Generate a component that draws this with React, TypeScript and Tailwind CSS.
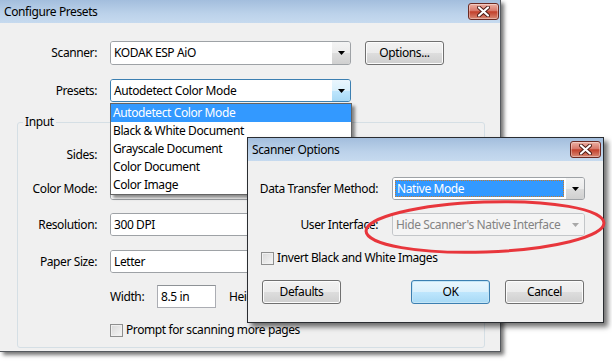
import type { ReactNode } from 'react';

function CloseButton() {
  return (
    <div className="flex h-[17px] w-[31px] items-center justify-center rounded-[3px] border border-[#6b2a22] bg-[linear-gradient(#ecb1a4,#d8786a_45%,#c2402b_52%,#d98a76)] shadow-[inset_0_0_0_1px_rgba(255,255,255,0.35)]">
      <svg width="13" height="11" viewBox="0 0 13 11">
        <path d="M2 1.5l9 8M11 1.5l-9 8" stroke="#4a1a14" strokeWidth="4" strokeLinecap="round" />
        <path d="M2 1.5l9 8M11 1.5l-9 8" stroke="#ffffff" strokeWidth="2.2" strokeLinecap="round" />
      </svg>
    </div>
  );
}

function TitleBar({ title, pr }: { title: string; pr: string }) {
  return (
    <div className={`flex h-[23px] shrink-0 items-center justify-between bg-[linear-gradient(#a3bedd,#bcd2ea_60%,#c6daef)] pl-[4px] ${pr}`}>
      <span>{title}</span>
      <CloseButton />
    </div>
  );
}

function Arrow({ color = '#000000' }: { color?: string }) {
  return (
    <svg width="7" height="4" viewBox="0 0 7 4">
      <path d="M0 0h7L3.5 4z" fill={color} />
    </svg>
  );
}

function Combo({
  value,
  width,
  focused,
  disabled,
  selected,
}: {
  value: string;
  width: string;
  focused?: boolean;
  disabled?: boolean;
  selected?: boolean;
}) {
  const border = focused ? 'border-[#3c7fb1]' : disabled ? 'border-[#c3c6c9]' : 'border-[#9ea2a6]';
  const field = disabled ? 'bg-[#f4f4f4] text-[#838383]' : 'bg-white';
  const btn = focused
    ? 'bg-[linear-gradient(#eaf6fd,#d9f0fc_50%,#bee6fd_51%,#a7d9f5)]'
    : disabled
      ? 'bg-[#f4f4f4]'
      : 'bg-[linear-gradient(#f4f4f4,#ebebeb_50%,#dddddd_51%,#d0d0d0)]';
  return (
    <div className={`flex h-full overflow-hidden rounded-[3px] border whitespace-nowrap ${border} ${width}`}>
      <div className={`flex flex-1 items-center overflow-hidden ${field} ${selected ? 'p-[2px]' : 'pl-[3px]'}`}>
        {selected ? (
          <div className="flex h-full w-full items-center border border-dotted border-[#c87a2a] bg-[#3399ff] pl-[1px] text-white">
            {value}
          </div>
        ) : (
          value
        )}
      </div>
      <div className={`flex w-[18px] shrink-0 items-center justify-center ${btn}`}>
        <Arrow color={disabled ? '#a8a8a8' : '#000000'} />
      </div>
    </div>
  );
}

function Button({ children, width, primary }: { children: ReactNode; width: string; primary?: boolean }) {
  return (
    <div
      className={`flex h-[24px] items-center justify-center rounded-[3px] border ${width} ${
        primary
          ? 'border-[#3c7fb1] bg-[linear-gradient(#eaf6fd,#d9f0fc_50%,#bee6fd_51%,#a7d9f5)] shadow-[inset_0_0_0_1px_#c4e5f6]'
          : 'border-[#707070] bg-[linear-gradient(#f2f2f2,#ebebeb_50%,#dddddd_51%,#cfcfcf)] shadow-[inset_0_0_0_1px_#fcfcfc]'
      }`}
    >
      {children}
    </div>
  );
}

function Checkbox({ label, offset }: { label: string; offset: string }) {
  return (
    <div className={`flex h-[16px] items-center whitespace-nowrap ${offset}`}>
      <div className="h-[13px] w-[13px] shrink-0 border border-[#8e8f8f] bg-[linear-gradient(135deg,#d8d8d8,#f6f6f6)] shadow-[inset_0_0_0_1px_#f0f0f0]" />
      <span className="ml-[3px]">{label}</span>
    </div>
  );
}

const PRESETS = [
  'Autodetect Color Mode',
  'Black & White Document',
  'Grayscale Document',
  'Color Document',
  'Color Image',
];

export default function App() {
  return (
    <div className="relative h-[362px] w-[612px] overflow-hidden bg-white font-['Noto_Sans',sans-serif] text-[12px] leading-[16px] tracking-[-0.4px] text-black">
      {/* Configure Presets */}
      <div className="flex h-[352px] w-[501px] flex-col border-r border-b border-[#55595e] bg-[#f0f0f0] shadow-[3px_3px_4px_rgba(0,0,0,0.55)]">
        <TitleBar title="Configure Presets" pr="pr-[1px]" />
        <div className="flex flex-col pt-[18px]">
          <div className="flex h-[24px] items-center">
            <span className="w-[97px] text-right">Scanner:</span>
            <div className="ml-[13px] h-full">
              <Combo value="KODAK ESP AiO" width="w-[241px]" />
            </div>
            <div className="ml-[14px]">
              <Button width="w-[79px]">Options...</Button>
            </div>
          </div>
          <div className="mt-[14px] flex h-[23px] items-center">
            <span className="w-[97px] text-right">Presets:</span>
            <div className="ml-[13px] h-full">
              <Combo value="Autodetect Color Mode" width="w-[241px]" focused />
            </div>
          </div>

          <fieldset className="mt-[12px] ml-[17px] h-[234px] w-[468px] rounded-[3px] border border-[#d5dfe5]">
            <legend className="ml-[5px] px-[2px]">Input</legend>
            <div className="flex flex-col pt-[13px]">
              {/* Sides and Color Mode values sit under the open list */}
              <div className="flex h-[23px] items-center">
                <span className="w-[79px] text-right">Sides:</span>
                <div className="ml-[13px] h-full">
                  <Combo value="" width="w-[241px]" />
                </div>
              </div>
              <div className="mt-[11px] flex h-[23px] items-center">
                <span className="w-[79px] text-right">Color Mode:</span>
                <div className="ml-[13px] h-full">
                  <Combo value="" width="w-[241px]" />
                </div>
              </div>
              <div className="mt-[13px] flex h-[23px] items-center">
                <span className="w-[79px] text-right">Resolution:</span>
                <div className="ml-[13px] h-full">
                  <Combo value="300 DPI" width="w-[241px]" />
                </div>
              </div>
              <div className="mt-[14px] flex h-[23px] items-center">
                <span className="w-[79px] text-right">Paper Size:</span>
                <div className="ml-[13px] h-full">
                  <Combo value="Letter" width="w-[241px]" />
                </div>
              </div>
              <div className="mt-[12px] flex h-[23px] items-center pl-[92px]">
                <span className="w-[47px]">Width:</span>
                <div className="flex h-full w-[59px] items-center border border-[#abadb3] border-t-[#8e9296] bg-white pl-[3px]">
                  8.5 in
                </div>
                <span className="ml-[13px] w-[20px] overflow-hidden whitespace-nowrap">Height:</span>
              </div>
              <div className="mt-[14px]">
                <Checkbox label="Prompt for scanning more pages" offset="pl-[92px]" />
              </div>
            </div>
          </fieldset>
        </div>
      </div>

      {/* open Presets list */}
      <div className="absolute top-[103px] left-[110px] flex w-[242px] flex-col border border-[#646464] bg-white shadow-[3px_3px_3px_rgba(0,0,0,0.45)]">
        {PRESETS.map((p, i) => (
          <div
            key={p}
            className={`flex h-[18px] items-center pl-[2px] ${i === 0 ? 'bg-[#3399ff] text-white' : ''}`}
          >
            {p}
          </div>
        ))}
      </div>

      {/* Scanner Options */}
      <div className="absolute top-[137px] left-[247px] flex h-[186px] w-[357px] flex-col border border-[#2a2d31] bg-[#f0f0f0] shadow-[4px_4px_5px_rgba(0,0,0,0.55)]">
        <TitleBar title="Scanner Options" pr="pr-[2px]" />
        <div className="flex flex-col pt-[16px]">
          <div className="flex h-[23px] items-center">
            <span className="w-[130px] text-right">Data Transfer Method:</span>
            <div className="ml-[14px] h-full">
              <Combo value="Native Mode" width="w-[193px]" selected />
            </div>
          </div>
          <div className="mt-[13px] flex h-[23px] items-center">
            <span className="w-[130px] text-right">User Interface:</span>
            <div className="ml-[14px] h-full">
              <Combo value="Hide Scanner's Native Interface" width="w-[193px]" disabled />
            </div>
          </div>
          <div className="mt-[14px]">
            <Checkbox label="Invert Black and White Images" offset="pl-[13px]" />
          </div>
          <div className="mt-[14px] flex items-center pl-[14px]">
            <Button width="w-[79px]">Defaults</Button>
            <div className="ml-[70px]">
              <Button width="w-[79px]" primary>
                OK
              </Button>
            </div>
            <div className="ml-[15px]">
              <Button width="w-[79px]">Cancel</Button>
            </div>
          </div>
        </div>
      </div>

      {/* red annotation ring */}
      <svg className="absolute top-[196px] left-[360px]" width="250" height="64" viewBox="0 0 250 64">
        <ellipse cx="125" cy="31" rx="119" ry="25" transform="rotate(-2 125 31)" fill="none" stroke="#e8363c" strokeWidth="3" />
      </svg>
    </div>
  );
}
